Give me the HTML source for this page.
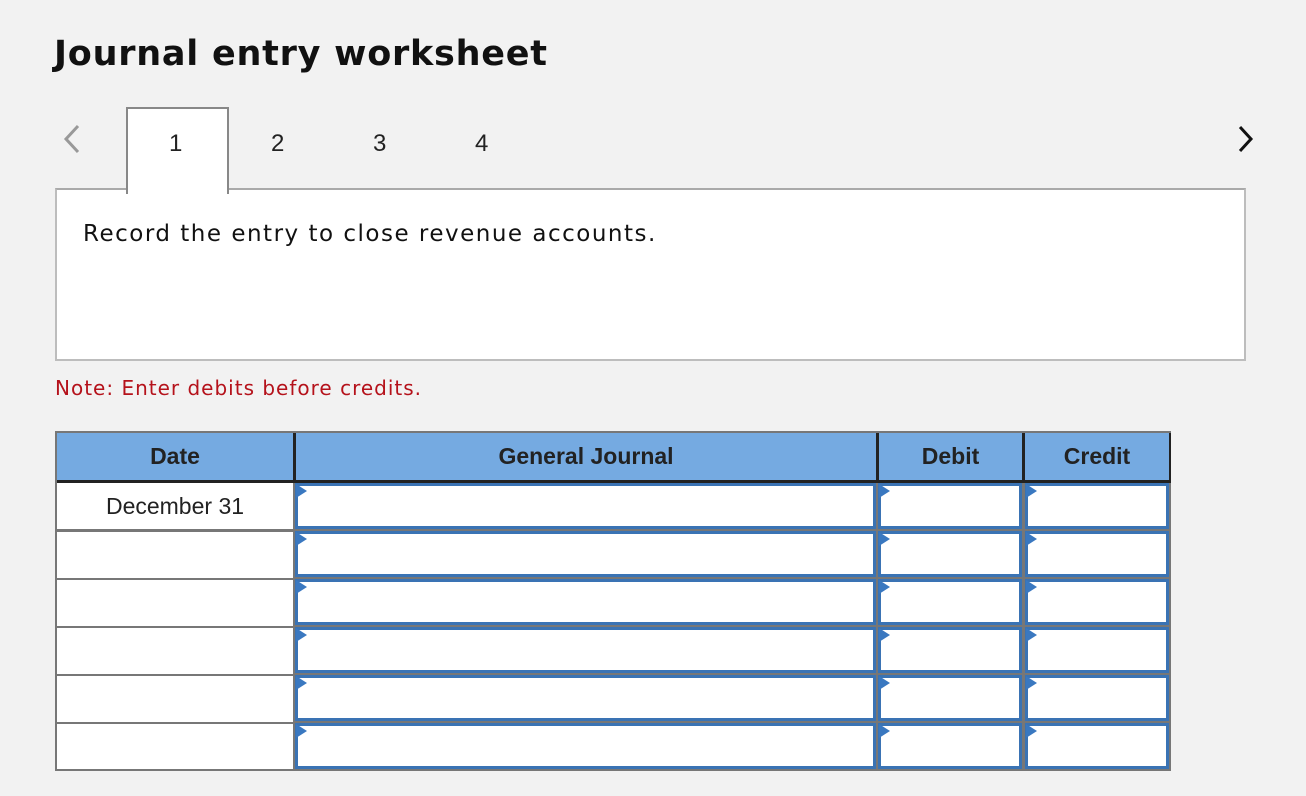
<!DOCTYPE html>
<html><head><meta charset="utf-8"><style>
body{margin:0;width:1306px;height:796px;background:#f2f2f2;font-family:"Liberation Sans",Arial,sans-serif;position:relative;overflow:hidden}
.a{position:absolute}
h1{position:absolute;left:54px;top:34px;margin:0;font-family:"DejaVu Sans",sans-serif;font-weight:bold;font-size:35px;color:#111;letter-spacing:0.75px}
.tab{font-size:24px;color:#222;top:130px}
.box{left:55px;top:188px;width:1187px;height:169px;background:#fff;border:2px solid #bdbdbd;border-top-color:#aaa}
.tab1{left:126px;top:107px;width:99px;height:85px;background:#fff;border:2px solid #888;border-bottom:none;z-index:2}
.grid{left:55px;top:431px;width:1116px;height:340px;background:#777}
.hd{background:#75aae1;top:433px;height:47px;font-weight:bold;font-size:23px;color:#222;text-align:center;line-height:47px}
.dc{background:#fff;left:57px;width:236px;height:46px}
.in{background:#fff;border:3px solid #3a73b4;box-sizing:border-box;height:46px}
.tri{width:11px;height:14px}
</style></head><body>
<h1>Journal entry worksheet</h1>
<svg class="a" style="left:62px;top:124px" width="20" height="30"><path d="M16 2 L4 15 L16 28" stroke="#999" stroke-width="3" fill="none"/></svg>
<svg class="a" style="left:1236px;top:124px" width="20" height="30"><path d="M4 3 L15 15 L4 27" stroke="#111" stroke-width="3" fill="none"/></svg>
<div class="a tab1"></div>
<div class="a tab" style="left:169px;z-index:3">1</div>
<div class="a tab" style="left:271px">2</div>
<div class="a tab" style="left:373px">3</div>
<div class="a tab" style="left:475px">4</div>
<div class="a box"></div>
<div class="a" style="left:83px;top:221px;font-family:'DejaVu Sans',sans-serif;font-size:23px;color:#111;letter-spacing:1.5px">Record the entry to close revenue accounts.</div>
<div class="a" style="left:55px;top:376px;font-family:'DejaVu Sans',sans-serif;font-size:20px;color:#b5121b;letter-spacing:1px">Note: Enter debits before credits.</div>
<div class="a grid"></div>
<div class="a hd" style="left:57px;width:236px">Date</div>
<div class="a hd" style="left:296px;width:580px">General Journal</div>
<div class="a hd" style="left:879px;width:143px">Debit</div>
<div class="a hd" style="left:1025px;width:144px">Credit</div>
<div class="a" style="left:57px;top:480px;width:1114px;height:3px;background:#222"></div>
<div class="a" style="left:293px;top:433px;width:3px;height:49px;background:#222"></div>
<div class="a" style="left:876px;top:433px;width:3px;height:49px;background:#222"></div>
<div class="a" style="left:1022px;top:433px;width:3px;height:49px;background:#222"></div>
<div class="a" style="left:1169px;top:433px;width:2px;height:49px;background:#222"></div>

<div class="a dc" style="top:483px;font-size:23px;color:#222;text-align:center;line-height:46px">December 31</div>
<div class="a dc" style="top:532px"></div>
<div class="a dc" style="top:580px"></div>
<div class="a dc" style="top:628px"></div>
<div class="a dc" style="top:676px"></div>
<div class="a dc" style="top:724px;height:45px"></div>

<div class="a in" style="left:295px;top:483px;width:581px"></div>
<div class="a in" style="left:295px;top:531px;width:581px"></div>
<div class="a in" style="left:295px;top:579px;width:581px"></div>
<div class="a in" style="left:295px;top:627px;width:581px"></div>
<div class="a in" style="left:295px;top:675px;width:581px"></div>
<div class="a in" style="left:295px;top:723px;width:581px"></div>

<div class="a in" style="left:878px;top:483px;width:144px"></div>
<div class="a in" style="left:878px;top:531px;width:144px"></div>
<div class="a in" style="left:878px;top:579px;width:144px"></div>
<div class="a in" style="left:878px;top:627px;width:144px"></div>
<div class="a in" style="left:878px;top:675px;width:144px"></div>
<div class="a in" style="left:878px;top:723px;width:144px"></div>

<div class="a in" style="left:1025px;top:483px;width:144px"></div>
<div class="a in" style="left:1025px;top:531px;width:144px"></div>
<div class="a in" style="left:1025px;top:579px;width:144px"></div>
<div class="a in" style="left:1025px;top:627px;width:144px"></div>
<div class="a in" style="left:1025px;top:675px;width:144px"></div>
<div class="a in" style="left:1025px;top:723px;width:144px"></div>

<svg class="a" style="left:0;top:0" width="1306" height="796">
<defs><path id="t" d="M0 0 L11 7 L0 14 Z" fill="#3a78c0"/></defs>
<g fill="#3a78c0">
<path d="M296 484l11 7l-11 7z"/><path d="M296 532l11 7l-11 7z"/><path d="M296 580l11 7l-11 7z"/><path d="M296 628l11 7l-11 7z"/><path d="M296 676l11 7l-11 7z"/><path d="M296 724l11 7l-11 7z"/>
<path d="M879 484l11 7l-11 7z"/><path d="M879 532l11 7l-11 7z"/><path d="M879 580l11 7l-11 7z"/><path d="M879 628l11 7l-11 7z"/><path d="M879 676l11 7l-11 7z"/><path d="M879 724l11 7l-11 7z"/>
<path d="M1026 484l11 7l-11 7z"/><path d="M1026 532l11 7l-11 7z"/><path d="M1026 580l11 7l-11 7z"/><path d="M1026 628l11 7l-11 7z"/><path d="M1026 676l11 7l-11 7z"/><path d="M1026 724l11 7l-11 7z"/>
</g></svg>
</body></html>
